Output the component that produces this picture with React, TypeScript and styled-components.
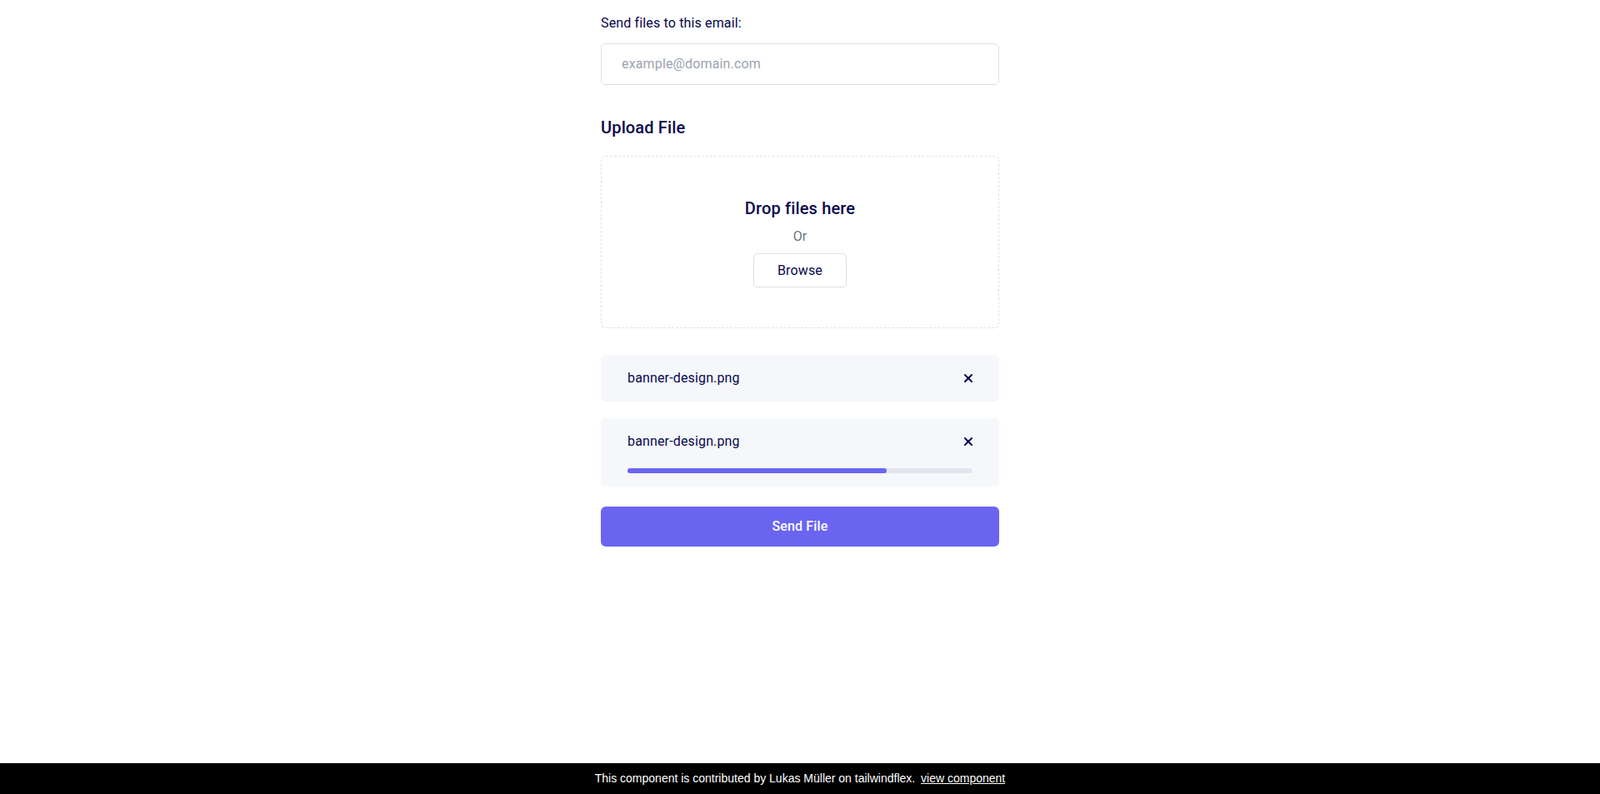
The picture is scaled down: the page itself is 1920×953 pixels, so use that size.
import React from 'react'
import styled, { createGlobalStyle } from 'styled-components'

const GlobalStyle = createGlobalStyle`
  html, body {
    margin: 0;
    padding: 0;
    background: #fff;
  }
  * {
    box-sizing: border-box;
  }
`

const font = `"Roboto", "Noto Sans", sans-serif`
const navy = '#07074D'

const Page = styled.div`
  display: flex;
  flex-direction: column;
  min-height: 100vh;
  font-family: ${font};
  letter-spacing: 0.15px;
`

const Main = styled.main`
  flex: 1;
  display: flex;
  justify-content: center;
`

const Card = styled.div`
  width: 100%;
  max-width: 550px;
  background: #fff;
`

const Form = styled.form`
  padding: 16px 36px 24px;
`

const Field = styled.div<{ $mb?: number; $pt?: number }>`
  margin-bottom: ${(p) => p.$mb ?? 0}px;
  padding-top: ${(p) => p.$pt ?? 0}px;
`

const Label = styled.label<{ $big?: boolean }>`
  display: block;
  margin-bottom: ${(p) => (p.$big ? 20 : 12)}px;
  font-size: ${(p) => (p.$big ? 20 : 16)}px;
  line-height: ${(p) => (p.$big ? 28 : 24)}px;
  font-weight: ${(p) => (p.$big ? 500 : 450)};
  color: ${navy};
`

const Input = styled.input`
  display: block;
  width: 100%;
  border: 1px solid #e0e0e0;
  border-radius: 6px;
  background: #fff;
  padding: 12px 24px;
  font-family: ${font};
  font-size: 16px;
  line-height: 24px;
  font-weight: 450;
  letter-spacing: 0.15px;
  color: #6b7280;
  outline: none;
  &::placeholder {
    color: #9ca3af;
  }
`

const DropZone = styled.label`
  display: flex;
  align-items: center;
  justify-content: center;
  min-height: 200px;
  margin-bottom: 32px;
  padding: 48px;
  border: 1px dashed #e0e0e0;
  border-radius: 6px;
  text-align: center;
`

const DropTitle = styled.span`
  display: block;
  margin-bottom: 8px;
  font-size: 20px;
  line-height: 28px;
  font-weight: 500;
  color: ${navy};
`

const Or = styled.span`
  display: block;
  margin-bottom: 8px;
  font-size: 16px;
  line-height: 24px;
  font-weight: 450;
  color: #6b7280;
`

const Browse = styled.span`
  display: inline-flex;
  padding: 8px 28px;
  border: 1px solid #e0e0e0;
  border-radius: 4px;
  font-size: 16px;
  line-height: 23px;
  font-weight: 450;
  color: ${navy};
`

const FileItem = styled.div`
  margin-bottom: 20px;
  padding: 16px 32px;
  border-radius: 6px;
  background: #f5f7fb;
`

const FileRow = styled.div`
  display: flex;
  align-items: center;
  justify-content: space-between;
`

const FileName = styled.span`
  overflow: hidden;
  white-space: nowrap;
  text-overflow: ellipsis;
  padding-right: 12px;
  font-size: 16px;
  line-height: 24px;
  font-weight: 450;
  color: ${navy};
`

const Remove = styled.button`
  display: flex;
  padding: 0;
  border: 0;
  background: none;
  color: ${navy};
  cursor: pointer;
`

const Track = styled.div`
  position: relative;
  margin-top: 20px;
  height: 6px;
  width: 100%;
  border-radius: 999px;
  background: #e2e5ef;
`

const Fill = styled.div`
  height: 100%;
  border-radius: 999px;
  background: #6a64f1;
`

const Submit = styled.button`
  display: block;
  width: 100%;
  padding: 12px 32px;
  border: 0;
  border-radius: 6px;
  background: #6a64f1;
  font-family: ${font};
  font-size: 16px;
  line-height: 24px;
  font-weight: 500;
  letter-spacing: 0.15px;
  color: #fff;
  cursor: pointer;
`

const Footer = styled.footer`
  background: #000;
  color: #fff;
  padding: 8px;
  text-align: center;
  font-family: "Liberation Sans", Arial, sans-serif;
  font-size: 14px;
  line-height: 21px;
  letter-spacing: 0;
`

const FooterLink = styled.a`
  margin-left: 3px;
  color: #fff;
  text-decoration: underline;
`

function CloseIcon() {
  return (
    <svg width='10' height='10' viewBox='0 0 10 10' fill='currentColor'>
      <path
        fillRule='evenodd'
        clipRule='evenodd'
        d='M0.279337 0.279338C0.651787 -0.0931121 1.25565 -0.0931121 1.6281 0.279338L9.72066 8.3719C10.0931 8.74435 10.0931 9.34821 9.72066 9.72066C9.34821 10.0931 8.74435 10.0931 8.3719 9.72066L0.279337 1.6281C-0.0931125 1.25565 -0.0931125 0.651788 0.279337 0.279338Z'
      />
      <path
        fillRule='evenodd'
        clipRule='evenodd'
        d='M0.279337 9.72066C-0.0931125 9.34821 -0.0931125 8.74435 0.279337 8.3719L8.3719 0.279338C8.74435 -0.0931127 9.34821 -0.0931123 9.72066 0.279338C10.0931 0.651787 10.0931 1.25565 9.72066 1.6281L1.6281 9.72066C1.25565 10.0931 0.651787 10.0931 0.279337 9.72066Z'
      />
    </svg>
  )
}

export default function App() {
  return (
    <Page>
      <GlobalStyle />
      <Main>
        <Card>
          <Form onSubmit={(e) => e.preventDefault()}>
            <Field $mb={20}>
              <Label htmlFor='email'>Send files to this email:</Label>
              <Input id='email' type='email' placeholder='example@domain.com' />
            </Field>

            <Field $mb={24} $pt={17}>
              <Label $big>Upload File</Label>

              <DropZone htmlFor='file'>
                <div>
                  <DropTitle>Drop files here</DropTitle>
                  <Or>Or</Or>
                  <Browse>Browse</Browse>
                </div>
              </DropZone>

              <FileItem>
                <FileRow>
                  <FileName>banner-design.png</FileName>
                  <Remove type='button'>
                    <CloseIcon />
                  </Remove>
                </FileRow>
              </FileItem>

              <FileItem>
                <FileRow>
                  <FileName>banner-design.png</FileName>
                  <Remove type='button'>
                    <CloseIcon />
                  </Remove>
                </FileRow>
                <Track>
                  <Fill style={{ width: '75%' }} />
                </Track>
              </FileItem>
            </Field>

            <Submit type='submit'>Send File</Submit>
          </Form>
        </Card>
      </Main>
      <Footer>
        This component is contributed by Lukas Müller on tailwindflex.{' '}
        <FooterLink href='#'>view component</FooterLink>
      </Footer>
    </Page>
  )
}
